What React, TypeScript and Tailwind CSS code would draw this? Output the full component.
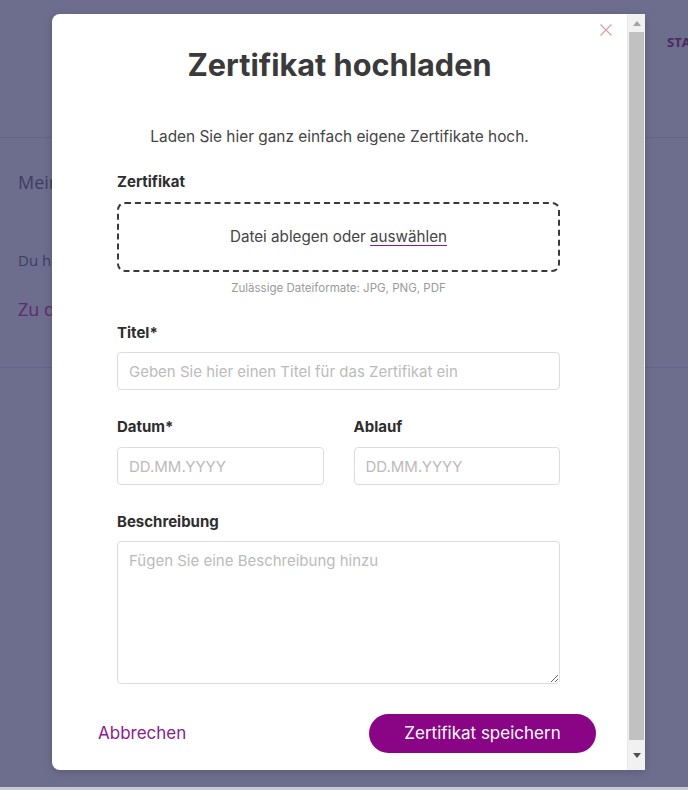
import React from "react";

export default function App() {
  return (
    <div className="relative h-[790px] w-[688px] overflow-hidden bg-[#6d6d8d] font-['Inter',sans-serif]">
      {/* background page (under overlay) */}
      <div className="absolute inset-0 font-['Open_Sans',sans-serif]">
        <div className="h-[138px] border-b border-[#64648a]">
          <div className="pl-[667px] pt-[33px] text-[13px] font-bold text-[#4a2a60]">STATUS</div>
        </div>
        <div className="h-[230px] border-b border-[#64648a] pl-[18px]">
          <div className="w-[34px] overflow-hidden whitespace-nowrap pt-[31px] text-[18px] text-[#3e3e62]">Meine Zertifikate</div>
          <div className="w-[34px] overflow-hidden whitespace-nowrap pt-[53px] text-[15px] text-[#3e3e62]">Du hast noch keine Zertifikate</div>
          <div className="w-[34px] overflow-hidden whitespace-nowrap pt-[24px] text-[18px] text-[#5a2c72]">Zu den Kursen</div>
        </div>
        <div className="absolute bottom-0 left-0 right-0 h-[3px] bg-[#c9c9d2]" />
      </div>

      {/* modal */}
      <div className="absolute left-[52px] top-[14px] flex h-[756px] w-[593px] overflow-hidden rounded-l-[8px] bg-white shadow-[0_2px_10px_rgba(0,0,0,0.15)]">
        <div className="relative flex w-[575px] flex-col">
          <button className="absolute right-[14px] top-[9px] text-[#d4a0a0]">
            <svg width="14" height="14" viewBox="0 0 14 14" fill="none" stroke="currentColor" strokeWidth="1.2">
              <path d="M1.5 1.5 L12.5 12.5 M12.5 1.5 L1.5 12.5" />
            </svg>
          </button>

          <h1 className="pt-[33px] text-center text-[30.7px] font-bold leading-[36px] text-[#3a3a3a]">
            Zertifikat hochladen
          </h1>
          <p className="mt-[43px] text-center text-[15.4px] leading-[22px] text-[#444]">
            Laden Sie hier ganz einfach eigene Zertifikate hoch.
          </p>

          <div className="flex flex-col pl-[65px] pr-[67px]">
            <label className="mt-[23px] text-[15px] font-bold leading-[22px] text-[#2e2e2e]">Zertifikat</label>
            <div className="mt-[9px] flex h-[70px] items-center justify-center rounded-[8px] border-2 border-dashed border-[#3a3a3a] text-[15.2px] text-[#444]">
              <span>
                Datei ablegen oder{" "}
                <span className="underline decoration-[#8b1a8b] underline-offset-[3px]">auswählen</span>
              </span>
            </div>
            <p className="mt-[8px] text-center text-[11.5px] leading-[16px] text-[#9a9a9a]">
              Zulässige Dateiformate: JPG, PNG, PDF
            </p>

            <label className="mt-[26px] text-[15px] font-bold leading-[22px] text-[#2e2e2e]">Titel*</label>
            <input
              className="mt-[8px] h-[38px] rounded-[4px] border border-[#dddddd] px-[11px] text-[15px] text-[#333] outline-none placeholder:text-[#bbbbbb]"
              placeholder="Geben Sie hier einen Titel für das Zertifikat ein"
            />

            <div className="mt-[26px] grid grid-cols-2 gap-[30px]">
              <div className="flex flex-col">
                <label className="text-[15px] font-bold leading-[22px] text-[#2e2e2e]">Datum*</label>
                <input
                  className="mt-[9px] h-[38px] rounded-[4px] border border-[#dddddd] px-[11px] text-[15px] text-[#333] outline-none placeholder:text-[#bbbbbb]"
                  placeholder="DD.MM.YYYY"
                />
              </div>
              <div className="flex flex-col">
                <label className="text-[15px] font-bold leading-[22px] text-[#2e2e2e]">Ablauf</label>
                <input
                  className="mt-[9px] h-[38px] rounded-[4px] border border-[#dddddd] px-[11px] text-[15px] text-[#333] outline-none placeholder:text-[#bbbbbb]"
                  placeholder="DD.MM.YYYY"
                />
              </div>
            </div>

            <label className="mt-[26px] text-[15px] font-bold leading-[22px] text-[#2e2e2e]">Beschreibung</label>
            <textarea
              className="mt-[8px] h-[143px] rounded-[4px] border border-[#dddddd] px-[11px] py-[8px] text-[15px] text-[#333] outline-none placeholder:text-[#bbbbbb]"
              placeholder="Fügen Sie eine Beschreibung hinzu"
            />
          </div>

          <div className="mt-[30px] flex items-center justify-between pl-[46px] pr-[31px]">
            <button className="text-[17px] text-[#8b1a8b]">Abbrechen</button>
            <button className="h-[39px] w-[227px] rounded-full bg-[#8a0585] text-[17px] text-white">
              Zertifikat speichern
            </button>
          </div>
        </div>

        {/* scrollbar */}
        <div className="flex w-[18px] flex-col border-l border-[#e8e8e8] bg-[#f1f1f1]">
          <div className="flex h-[18px] items-center justify-center">
            <div className="h-0 w-0 border-x-[4px] border-b-[5px] border-x-transparent border-b-[#a3a3a3]" />
          </div>
          <div className="mx-[1px] h-[708px] bg-[#c1c1c1]" />
          <div className="flex flex-1 items-center justify-center">
            <div className="h-0 w-0 border-x-[4px] border-t-[5px] border-x-transparent border-t-[#505050]" />
          </div>
        </div>
      </div>
    </div>
  );
}
